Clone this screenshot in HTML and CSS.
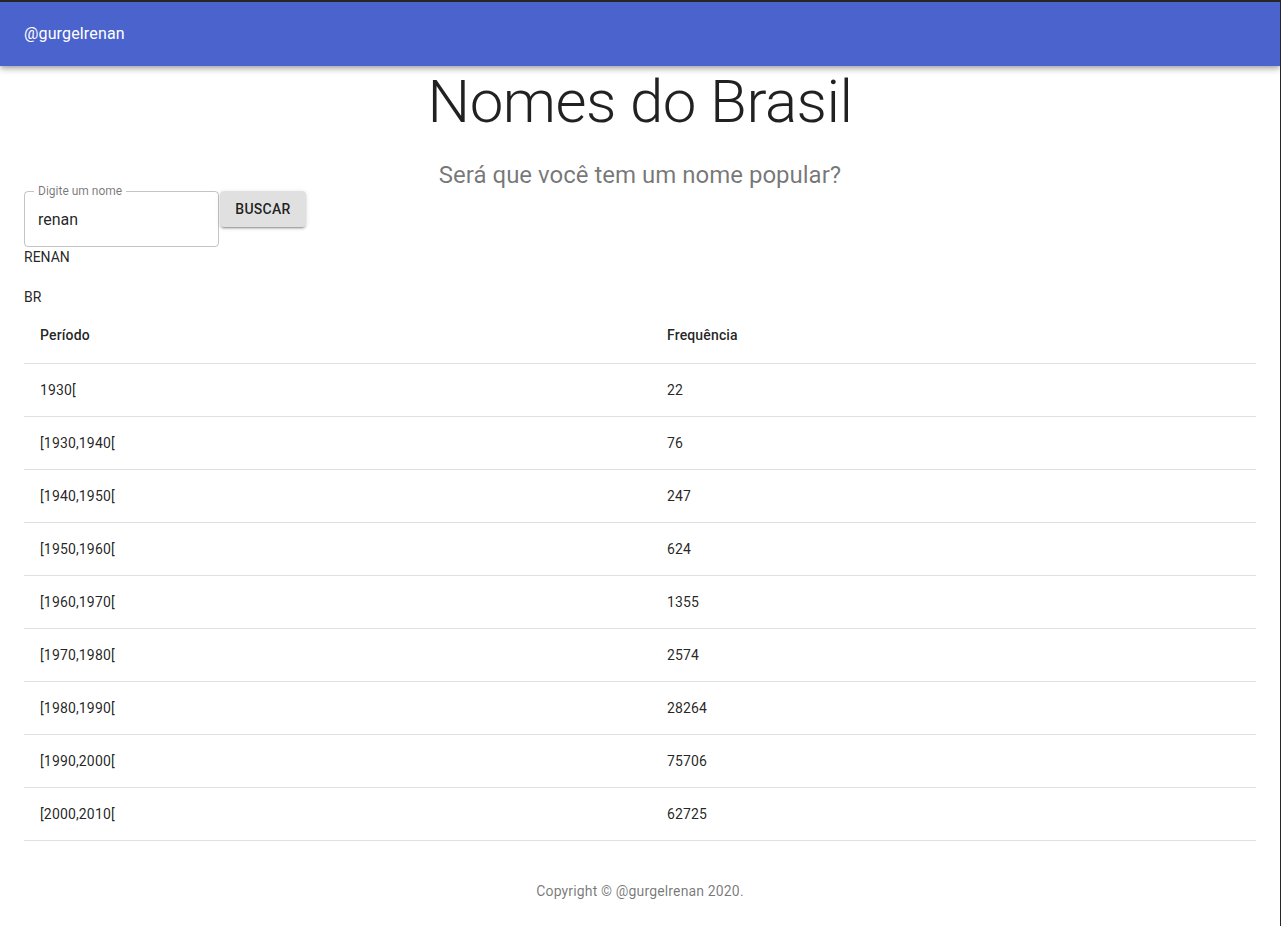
FILE: index.html
```html
<!DOCTYPE html>
<html lang="pt-BR">
<head>
<meta charset="utf-8">
<title>Nomes do Brasil</title>
<link rel="stylesheet" href="styles.css">
</head>
<body>
<header class="appbar">
  <span class="appbar-title">@gurgelrenan</span>
</header>
<main class="container">
  <h1 class="title">Nomes do Brasil</h1>
  <h2 class="subtitle">Será que você tem um nome popular?</h2>
  <form class="search">
    <fieldset class="field">
      <legend class="field-label">Digite um nome</legend>
      <input class="field-input" type="text" value="renan">
    </fieldset>
    <button class="btn" type="button">Buscar</button>
  </form>
  <p class="info info-name">RENAN</p>
  <p class="info">BR</p>
  <table class="table">
    <thead>
      <tr><th class="col-period">Período</th><th>Frequência</th></tr>
    </thead>
    <tbody>
      <tr><td>1930[</td><td>22</td></tr>
      <tr><td>[1930,1940[</td><td>76</td></tr>
      <tr><td>[1940,1950[</td><td>247</td></tr>
      <tr><td>[1950,1960[</td><td>624</td></tr>
      <tr><td>[1960,1970[</td><td>1355</td></tr>
      <tr><td>[1970,1980[</td><td>2574</td></tr>
      <tr><td>[1980,1990[</td><td>28264</td></tr>
      <tr><td>[1990,2000[</td><td>75706</td></tr>
      <tr><td>[2000,2010[</td><td>62725</td></tr>
    </tbody>
  </table>
  <footer class="footer">Copyright © @gurgelrenan 2020.</footer>
</main>
</body>
</html>
```

FILE: styles.css
```css
html {
  background: #262626;
}
body {
  margin: 2px 1px 0 0;
  min-height: calc(100vh - 2px);
  background: #fff;
  font-family: Roboto, "Liberation Sans", sans-serif;
  color: rgba(0, 0, 0, 0.87);
}
.appbar {
  height: 64px;
  display: flex;
  align-items: center;
  padding: 0 24px;
  background: #4b63cc;
  color: #fff;
  box-shadow: 0 2px 4px -1px rgba(0,0,0,0.2), 0 4px 5px 0 rgba(0,0,0,0.14), 0 1px 10px 0 rgba(0,0,0,0.12);
  position: relative;
  z-index: 1;
}
.appbar-title {
  font-size: 16px;
  line-height: 24px;
  letter-spacing: 0.00938em;
}
.container {
  padding: 0 24px;
}
.title {
  margin: 0;
  font-size: 60px;
  font-weight: 300;
  line-height: 72px;
  letter-spacing: -0.00833em;
  text-align: center;
  color: rgba(0, 0, 0, 0.87);
}
.subtitle {
  margin: 21px 0 0;
  font-size: 24px;
  font-weight: 400;
  line-height: 32px;
  text-align: center;
  color: rgba(0, 0, 0, 0.54);
}
.search {
  display: flex;
  align-items: flex-start;
}
.field {
  width: 195px;
  box-sizing: border-box;
  margin: -6px 0 0;
  height: 62px;
  padding: 0 13px;
  border: 1px solid rgba(0, 0, 0, 0.23);
  border-radius: 4px;
  display: flex;
  align-items: center;
}
.field-label {
  font-size: 12px;
  line-height: 12px;
  color: rgba(0, 0, 0, 0.54);
  padding: 0 4px;
  margin-left: -4px;
}
.field-input {
  border: 0;
  outline: 0;
  padding: 0;
  margin-top: -5px;
  width: 100%;
  font-family: inherit;
  font-size: 16px;
  line-height: 19px;
  color: rgba(0, 0, 0, 0.87);
  background: transparent;
}
.btn {
  margin-left: 1px;
  width: 86px;
  height: 36px;
  padding: 6px 0;
  border: 0;
  border-radius: 4px;
  background: #e0e0e0;
  color: rgba(0, 0, 0, 0.87);
  font-family: inherit;
  font-size: 14px;
  font-weight: 500;
  letter-spacing: 0.02em;
  text-transform: uppercase;
  box-shadow: 0 3px 1px -2px rgba(0,0,0,0.2), 0 2px 2px 0 rgba(0,0,0,0.14), 0 1px 5px 0 rgba(0,0,0,0.12);
}
.info {
  margin: 0;
  font-size: 14px;
  line-height: 20px;
}
.info-name {
  margin-top: 0;
  margin-bottom: 20px;
}
.table {
  width: 100%;
  border-collapse: collapse;
  font-size: 14px;
}
.table th,
.table td {
  text-align: left;
  padding: 16px;
  border-bottom: 1px solid rgba(224, 224, 224, 1);
  letter-spacing: 0.01071em;
}
.table th {
  font-weight: 500;
  line-height: 24px;
}
.table td {
  font-weight: 400;
  line-height: 20px;
}
.col-period {
  width: 595px;
}
.footer {
  margin-top: 40px;
  font-size: 14px;
  line-height: 20px;
  text-align: center;
  color: rgba(0, 0, 0, 0.54);
  letter-spacing: 0.01071em;
}
```
